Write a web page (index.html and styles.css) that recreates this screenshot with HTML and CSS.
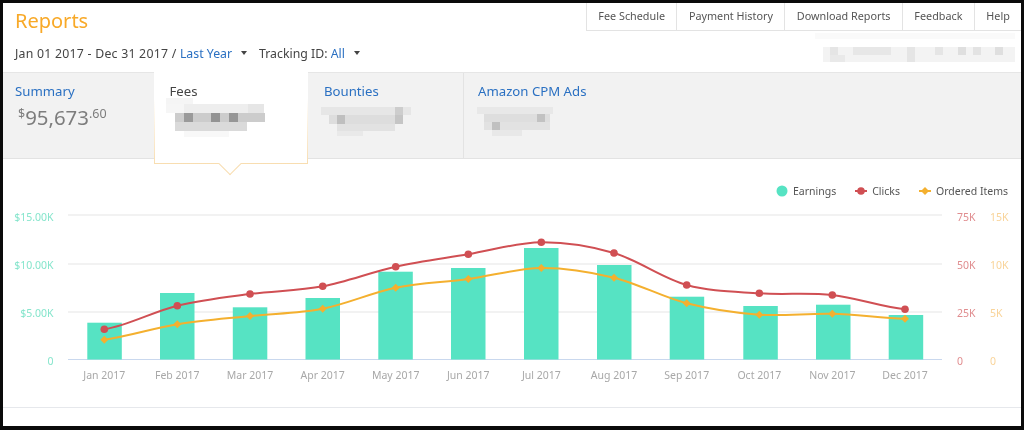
FILE: index.html
```html
<!DOCTYPE html>
<html lang="en">
<head>
    <meta charset="UTF-8">
    <title>Reports</title>
    <link rel="stylesheet" href="styles.css">
</head>
<body>
    <div class="frame">
        <div class="top-row">
            <h1 class="title">Reports</h1>
            <nav class="top-nav">
                <a>Fee Schedule</a>
                <a>Payment History</a>
                <a>Download Reports</a>
                <a>Feedback</a>
                <a>Help</a>
            </nav>
        </div>

        <div class="filter-row">
            <span class="filter filter-date">Jan 01 2017 - Dec 31 2017 / <b>Last Year</b><i class="caret"></i></span>
            <span class="filter">Tracking ID: <b>All</b><i class="caret"></i></span>
            <svg class="smudge account-smudge" width="200" height="29" viewBox="0 0 200 29">
                <rect x="0" y="0" width="200" height="6" opacity=".03"/>
                <rect x="8" y="14" width="192" height="15" opacity=".07"/>
                <rect x="15" y="14" width="8" height="8" opacity=".09"/>
                <rect x="38" y="14" width="38" height="8" opacity=".08"/>
                <rect x="15" y="22" width="15" height="7" opacity=".06"/>
                <rect x="92" y="14" width="8" height="15" opacity=".09"/>
                <rect x="120" y="14" width="8" height="8" opacity=".09"/>
                <rect x="143" y="14" width="8" height="8" opacity=".12"/>
                <rect x="158" y="14" width="8" height="8" opacity=".1"/>
                <rect x="180" y="14" width="8" height="8" opacity=".12"/>
            </svg>
        </div>

        <div class="tabs">
            <div class="tab tab-summary">
                <a class="tab-name">Summary</a>
                <div class="amount"><sup>$</sup>95,673<sup>.60</sup></div>
            </div>
            <div class="tab tab-active">
                <a class="tab-name">Fees</a>
                <svg class="smudge" width="100" height="40" viewBox="0 0 100 40">
                    <rect x="0" y="0" width="27" height="6" opacity=".06"/>
                    <rect x="0" y="6" width="18" height="9" opacity=".05"/>
                    <rect x="18" y="6" width="64" height="9" opacity=".1"/>
                    <rect x="82" y="6" width="16" height="9" opacity=".15"/>
                    <rect x="9" y="15" width="90" height="9" opacity=".3"/>
                    <rect x="18" y="15" width="9" height="9" opacity=".42"/>
                    <rect x="45" y="15" width="9" height="9" opacity=".48"/>
                    <rect x="63" y="15" width="9" height="9" opacity=".45"/>
                    <rect x="9" y="24" width="72" height="9" opacity=".22"/>
                    <rect x="18" y="33" width="45" height="6" opacity=".04"/>
                </svg>
            </div>
            <div class="tab tab-bounties">
                <a class="tab-name">Bounties</a>
                <svg class="smudge" width="92" height="30" viewBox="0 0 92 30">
                    <rect x="0" y="0" width="90" height="8" opacity=".07"/>
                    <rect x="8" y="8" width="74" height="9" opacity=".13"/>
                    <rect x="16" y="8" width="8" height="9" opacity=".22"/>
                    <rect x="74" y="0" width="8" height="17" opacity=".17"/>
                    <rect x="16" y="17" width="58" height="7" opacity=".1"/>
                    <rect x="16" y="24" width="26" height="5" opacity=".05"/>
                </svg>
            </div>
            <div class="tab tab-last">
                <a class="tab-name">Amazon CPM Ads</a>
                <svg class="smudge" width="76" height="30" viewBox="0 0 76 30">
                    <rect x="0" y="0" width="76" height="7" opacity=".06"/>
                    <rect x="7" y="7" width="66" height="8" opacity=".12"/>
                    <rect x="15" y="15" width="8" height="8" opacity=".24"/>
                    <rect x="7" y="15" width="66" height="8" opacity=".1"/>
                    <rect x="60" y="7" width="8" height="8" opacity=".2"/>
                    <rect x="15" y="23" width="30" height="6" opacity=".06"/>
                </svg>
            </div>
        </div>

        <div class="chart-section">
            <div class="legend">
                <span class="legend-item">
                    <svg width="12" height="12" viewBox="0 0 12 12"><circle cx="6" cy="6" r="5.5" fill="#56e3c3"/></svg>
                    Earnings
                </span>
                <span class="legend-item">
                    <svg width="12" height="12" viewBox="0 0 12 12"><path d="M0 6H12" stroke="#d04f53" stroke-width="2"/><circle cx="6" cy="6" r="3.8" fill="#d04f53"/></svg>
                    Clicks
                </span>
                <span class="legend-item">
                    <svg width="12" height="12" viewBox="0 0 12 12"><path d="M0 6H12" stroke="#f4b02f" stroke-width="2"/><path d="M6 2 10 6 6 10 2 6Z" fill="#f4b02f"/></svg>
                    Ordered Items
                </span>
            </div>

            <!-- viewBox uses page coordinates so the points are easy to read off -->
            <svg class="chart" width="1018" height="202" viewBox="3 205 1018 202">
                <g class="grid">
                    <path d="M68 215H942"/>
                    <path d="M68 264H942"/>
                    <path d="M68 312H942"/>
                </g>
                <path class="baseline" d="M68 359.5H942"/>

                <g class="bars">
                    <rect x="87.3" y="322.7" width="34.5" height="36.8"/>
                    <rect x="160" y="293" width="34.5" height="66.5"/>
                    <rect x="232.8" y="307.3" width="34.5" height="52.2"/>
                    <rect x="305.5" y="298" width="34.5" height="61.5"/>
                    <rect x="378.3" y="271.7" width="34.5" height="87.8"/>
                    <rect x="451" y="268" width="34.5" height="91.5"/>
                    <rect x="524" y="248" width="34.5" height="111.5"/>
                    <rect x="597" y="265" width="34.5" height="94.5"/>
                    <rect x="669.7" y="296.7" width="34.5" height="62.8"/>
                    <rect x="743.3" y="306" width="34.5" height="53.5"/>
                    <rect x="816" y="304.7" width="34.5" height="54.8"/>
                    <rect x="888.7" y="315" width="34.5" height="44.5"/>
                </g>

                <path class="line-clicks" d="M104.3 329.3 C128.5 325.4,153.1 311.6,177.3 305.7 C201.5 299.8,225.8 297.2,250 294 C274.2 290.8,298.5 290.9,322.7 286.3 C346.9 281.7,371.5 272,395.7 266.7 C419.9 261.4,444.1 258.4,468.3 254.3 C492.5 250.2,517.1 242.5,541.3 242.3 C565.5 242.1,589.8 245.9,614 253 C638.2 260.1,662.5 278.3,686.7 285 C710.9 291.7,735.1 291.6,759.3 293.3 C783.5 295,808.1 292.3,832.3 295 C856.5 297.7,880.8 306.9,905 309.3"/>
                <g class="dots-clicks">
                    <circle cx="104.3" cy="329.3" r="3.8"/>
                    <circle cx="177.3" cy="305.7" r="3.8"/>
                    <circle cx="250" cy="294" r="3.8"/>
                    <circle cx="322.7" cy="286.3" r="3.8"/>
                    <circle cx="395.7" cy="266.7" r="3.8"/>
                    <circle cx="468.3" cy="254.3" r="3.8"/>
                    <circle cx="541.3" cy="242.3" r="3.8"/>
                    <circle cx="614" cy="253" r="3.8"/>
                    <circle cx="686.7" cy="285" r="3.8"/>
                    <circle cx="759.3" cy="293.3" r="3.8"/>
                    <circle cx="832.3" cy="295" r="3.8"/>
                    <circle cx="905" cy="309.3" r="3.8"/>
                </g>

                <path class="line-items" d="M104.3 339.7 C128.5 336.5,153.1 328.2,177.3 324.3 C201.5 320.3,225.8 318.6,250 316 C274.2 313.4,298.5 313.4,322.7 308.7 C346.9 304,371.5 292.6,395.7 287.7 C419.9 282.8,444.1 282.3,468.3 279 C492.5 275.7,517.1 268.2,541.3 268 C565.5 267.8,589.8 271.8,614 277.7 C638.2 283.6,662.5 297.1,686.7 303.3 C710.9 309.5,735.1 313,759.3 314.7 C783.5 316.4,808.1 313,832.3 313.7 C856.5 314.4,880.8 317.9,905 318.7"/>
                <g class="dots-items">
                    <path d="M104.3 335.7 108.3 339.7 104.3 343.7 100.3 339.7Z"/>
                    <path d="M177.3 320.3 181.3 324.3 177.3 328.3 173.3 324.3Z"/>
                    <path d="M250 312 254 316 250 320 246 316Z"/>
                    <path d="M322.7 304.7 326.7 308.7 322.7 312.7 318.7 308.7Z"/>
                    <path d="M395.7 283.7 399.7 287.7 395.7 291.7 391.7 287.7Z"/>
                    <path d="M468.3 275 472.3 279 468.3 283 464.3 279Z"/>
                    <path d="M541.3 264 545.3 268 541.3 272 537.3 268Z"/>
                    <path d="M614 273.7 618 277.7 614 281.7 610 277.7Z"/>
                    <path d="M686.7 299.3 690.7 303.3 686.7 307.3 682.7 303.3Z"/>
                    <path d="M759.3 310.7 763.3 314.7 759.3 318.7 755.3 314.7Z"/>
                    <path d="M832.3 309.7 836.3 313.7 832.3 317.7 828.3 313.7Z"/>
                    <path d="M905 314.7 909 318.7 905 322.7 901 318.7Z"/>
                </g>

                <g class="axis-earnings">
                    <text x="53.5" y="221">$15.00K</text>
                    <text x="53.5" y="269">$10.00K</text>
                    <text x="53.5" y="317">$5.00K</text>
                    <text x="53.5" y="365">0</text>
                </g>
                <g class="axis-clicks">
                    <text x="957" y="221">75K</text>
                    <text x="957" y="269">50K</text>
                    <text x="957" y="317">25K</text>
                    <text x="957" y="365">0</text>
                </g>
                <g class="axis-items">
                    <text x="990" y="221">15K</text>
                    <text x="990" y="269">10K</text>
                    <text x="990" y="317">5K</text>
                    <text x="990" y="365">0</text>
                </g>
                <g class="axis-months">
                    <text x="104.3" y="379">Jan 2017</text>
                    <text x="177.3" y="379">Feb 2017</text>
                    <text x="250" y="379">Mar 2017</text>
                    <text x="322.7" y="379">Apr 2017</text>
                    <text x="395.7" y="379">May 2017</text>
                    <text x="468.3" y="379">Jun 2017</text>
                    <text x="541.3" y="379">Jul 2017</text>
                    <text x="614" y="379">Aug 2017</text>
                    <text x="686.7" y="379">Sep 2017</text>
                    <text x="759.3" y="379">Oct 2017</text>
                    <text x="832.3" y="379">Nov 2017</text>
                    <text x="905" y="379">Dec 2017</text>
                </g>
            </svg>
        </div>
    </div>
</body>
</html>
```

FILE: styles.css
```css
* {
    margin: 0;
    padding: 0;
    box-sizing: border-box;
    font-family: "Noto Sans", sans-serif;
}

body {
    background: #0a0a0a;
    width: 1024px;
    height: 430px;
    overflow: hidden;
}

/* the source screenshot is a little soft */
.frame {
    display: flex;
    flex-direction: column;
    height: 430px;
    border: 3px solid #0a0a0a;
    border-bottom-width: 4px;
    background: #fff;
    filter: blur(0.35px);
}

.top-row {
    display: flex;
    justify-content: space-between;
    height: 30px;
}

.title {
    padding: 5px 0 0 12px;
    font-size: 20px;
    line-height: 26px;
    font-weight: 400;
    color: #f8a928;
}

.top-nav {
    display: flex;
    height: 28px;
    border-bottom: 1.5px solid #e3e3e3;
}

.top-nav a {
    display: flex;
    align-items: center;
    padding: 0 11.2px 2px 11.7px;
    border-left: 1.5px solid #e3e3e3;
    font-size: 10.8px;
    color: #555;
}

.filter-row {
    display: flex;
    height: 39px;
    gap: 12px;
    padding: 11px 0 0 12px;
    font-size: 12.3px;
    line-height: 20px;
    color: #444;
}

.filter b {
    font-weight: 400;
    color: #2a70c2;
}

.filter-date {
    letter-spacing: 0.24px;
}

.filter-date b {
    letter-spacing: 0;
}

.caret {
    display: inline-block;
    margin: 0 0 3px 9px;
    border: 3.5px solid transparent;
    border-top: 4px solid #444;
    border-bottom: 0;
    vertical-align: middle;
}

.smudge {
    display: block;
    fill: #555;
}

.account-smudge {
    margin: -11px 6px 0 auto;
}

.tabs {
    display: flex;
    height: 87px;
    background: #f2f2f2;
    border-top: 1.5px solid #e6e6e6;
    border-bottom: 1.5px solid #e3e3e3;
}

.tab {
    padding: 9px 0 0 12px;
}

.tab-name {
    display: block;
    font-size: 13.2px;
    line-height: 18px;
    color: #2a70c2;
}

.tab-summary {
    width: 151px;
}

.amount {
    padding: 3px 0 0 3px;
    font-size: 20.4px;
    line-height: 28px;
    color: #7d7d7d;
}

.amount sup {
    font-size: 12.5px;
    vertical-align: 7px;
    line-height: 0;
}

.tab-active {
    position: relative;
    width: 154px;
    height: 92px;
    margin-top: -1.5px;
    padding: 10px 0 0 14.5px;
    background: #fff;
    border: 1.5px solid #f8ddb0;
    border-top: 0;
    border-image: linear-gradient(to bottom, #fff 30%, #f8ddb0) 1;
}

.tab-active .tab-name {
    color: #444;
}

.tab-active .smudge {
    margin: -2px 0 0 -4px;
}

/* the little arrow under the selected tab */
.tab-active::after {
    content: "";
    position: absolute;
    left: 67px;
    bottom: -9px;
    width: 15px;
    height: 15px;
    background: #fff;
    border-right: 1.5px solid #f8ddb0;
    border-bottom: 1.5px solid #f8ddb0;
    transform: rotate(45deg);
}

.tab-bounties {
    width: 155px;
    padding-left: 16px;
}

.tab-bounties .smudge {
    margin: 7px 0 0 -3px;
}

.tab-last {
    flex: 1;
    padding-left: 14px;
    border-left: 1.5px solid #e3e3e3;
}

.tab-last .smudge {
    margin: 7px 0 0 -1px;
}

.chart-section {
    border-bottom: 1.5px solid #e6e8ec;
}

.legend {
    display: flex;
    justify-content: flex-end;
    align-items: center;
    gap: 19px;
    height: 46px;
    padding: 17px 13px 0 0;
    font-size: 10.5px;
    color: #555;
}

.legend-item {
    display: flex;
    align-items: center;
    gap: 5px;
}

.chart {
    display: block;
}

.chart text {
    font-size: 10.5px;
}

.grid path {
    stroke: #eeeeee;
    stroke-width: 1.5;
    fill: none;
}

.baseline {
    stroke: #c9d8ee;
    stroke-width: 1;
    fill: none;
}

.bars {
    fill: #56e3c3;
}

.line-clicks {
    fill: none;
    stroke: #d04f53;
    stroke-width: 2;
}

.dots-clicks {
    fill: #d04f53;
}

.line-items {
    fill: none;
    stroke: #f4b02f;
    stroke-width: 2;
}

.dots-items {
    fill: #f4b02f;
}

.axis-earnings {
    fill: #86e5cc;
    text-anchor: end;
}

.axis-clicks {
    fill: #e08d8f;
}

.axis-items {
    fill: #f9d49a;
}

.axis-months {
    fill: #a8a8a8;
    text-anchor: middle;
}
```
